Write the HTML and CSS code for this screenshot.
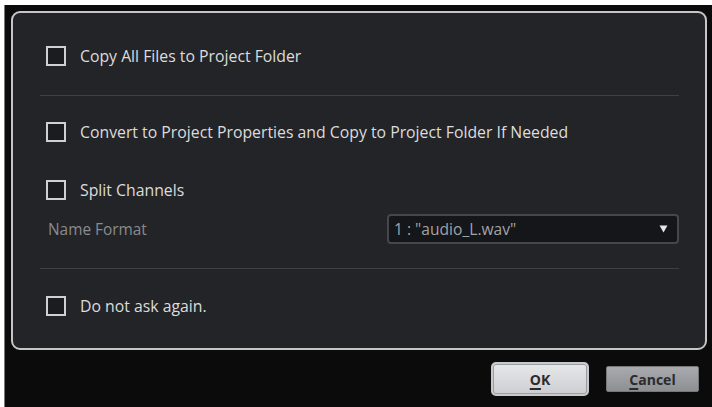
FILE: index.html
```html
<!DOCTYPE html>
<html>
<head>
<meta charset="utf-8">
<link rel="stylesheet" href="styles.css">
</head>
<body>
<div class="window">
  <div class="panel">
    <label class="check-row first">
      <span class="box"></span>
      <span class="label">Copy All Files to Project Folder</span>
    </label>
    <div class="sep sep1"></div>
    <label class="check-row row2">
      <span class="box"></span>
      <span class="label">Convert to Project Properties and Copy to Project Folder If Needed</span>
    </label>
    <label class="check-row row3">
      <span class="box"></span>
      <span class="label">Split Channels</span>
    </label>
    <div class="format-row">
      <span class="format-label">Name Format</span>
      <div class="select">
        <span class="select-text">1 : "audio_L.wav"</span>
        <svg class="arrow" width="9" height="8" viewBox="0 0 9 8"><path d="M0.5 0.5 H8.5 L4.5 7.5 Z" fill="#e6e6e6"/></svg>
      </div>
    </div>
    <div class="sep sep2"></div>
    <label class="check-row row4">
      <span class="box"></span>
      <span class="label">Do not ask again.</span>
    </label>
  </div>
  <div class="buttons">
    <button class="btn btn-ok"><span class="u">O</span>K</button>
    <button class="btn btn-cancel"><span class="u">C</span>ancel</button>
  </div>
</div>
</body>
</html>
```
FILE: styles.css
```css
html, body {
  margin: 0;
  padding: 0;
  background: #ffffff;
  width: 712px;
  height: 407px;
  overflow: hidden;
}
.window {
  margin-top: 5px;
  margin-left: 4px;
  height: 402px;
  background: #0b0b0c;
  border-left: 1px solid #7a7a7a;
  padding: 6px 5px 0 6px;
  box-sizing: border-box;
  font-family: "Open Sans", "Noto Sans", sans-serif;
}
.panel {
  width: 696px;
  height: 339px;
  box-sizing: border-box;
  border: 2px solid #c4c5c7;
  border-radius: 9px;
  background: #232428;
  padding: 33px 26px 0 27px;
  display: flex;
  flex-direction: column;
}
.check-row {
  display: flex;
  align-items: center;
  height: 20px;
  padding-left: 6px;
}
.box {
  width: 20px;
  height: 20px;
  box-sizing: border-box;
  border: 2px solid #cfd0d2;
  background: #1b1c1f;
  flex: none;
}
.label {
  margin-left: 14px;
  color: #dcdcdc;
  font-size: 15.8px;
  white-space: nowrap;
}
.sep {
  height: 1px;
  background: #3d4045;
}
.sep1 { margin-top: 29px; }
.row2 { margin-top: 26px; }
.row3 { margin-top: 38px; }
.format-row {
  margin-top: 14px;
  height: 30px;
  display: flex;
  align-items: center;
  justify-content: space-between;
}
.format-label {
  margin-left: 8px;
  color: #8a8b8d;
  font-size: 15.4px;
}
.select {
  width: 292px;
  height: 30px;
  box-sizing: border-box;
  border: 2px solid #45474b;
  border-radius: 4px;
  background: #151619;
  display: flex;
  align-items: center;
  justify-content: space-between;
  padding: 0 9px 0 5px;
}
.select-text {
  color: #a2a3a5;
  font-size: 15.6px;
}
.arrow { display: block; }
.sep2 { margin-top: 24px; }
.row4 { margin-top: 27px; }
.buttons {
  display: flex;
  justify-content: flex-end;
  align-items: center;
  gap: 17px;
  padding-right: 8px;
  margin-top: 12px;
}
.btn {
  font-family: "Open Sans", "Noto Sans", sans-serif;
  font-size: 14px;
  font-weight: 700;
  color: #2a2b2d;
  padding: 0;
  cursor: default;
}
.btn-ok {
  width: 98px;
  height: 34px;
  border: 2px solid #c9cacc;
  border-radius: 5px;
  background: linear-gradient(#e6e7e9, #cdced1);
  box-shadow: inset 0 0 0 1px #9c9da0;
}
.btn-cancel {
  width: 93px;
  height: 26px;
  border: 1px solid #77787b;
  border-radius: 2px;
  background: linear-gradient(#a9aaad, #8e8f92);
}
.u {
  text-decoration: underline;
  text-underline-offset: 3px;
  text-decoration-thickness: 2px;
}
```
